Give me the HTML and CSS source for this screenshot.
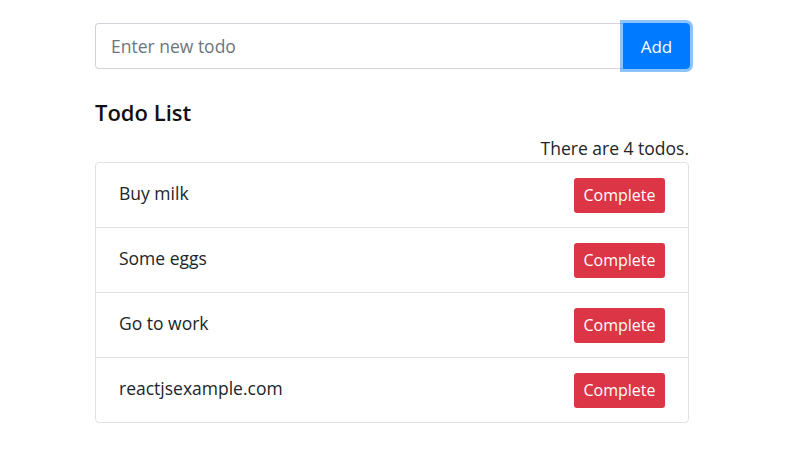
FILE: index.html
```html
<!DOCTYPE html>
<html>
<head>
<meta charset="utf-8">
<link rel="stylesheet" href="styles.css">
</head>
<body>
<div class="app">
  <form class="input-group">
    <input class="todo-input" type="text" placeholder="Enter new todo">
    <button class="add-btn" type="button">Add</button>
  </form>
  <h3 class="title">Todo List</h3>
  <div class="count">There are 4 todos.</div>
  <ul class="list">
    <li class="item"><span class="item-text">Buy milk</span><button class="complete-btn">Complete</button></li>
    <li class="item"><span class="item-text">Some eggs</span><button class="complete-btn">Complete</button></li>
    <li class="item"><span class="item-text">Go to work</span><button class="complete-btn">Complete</button></li>
    <li class="item"><span class="item-text">reactjsexample.com</span><button class="complete-btn">Complete</button></li>
  </ul>
</div>
</body>
</html>
```
FILE: styles.css
```css
* { box-sizing: border-box; }
html, body { margin: 0; padding: 0; background: #fff; }
body {
  font-family: "Open Sans", "Noto Sans", sans-serif;
  color: #212529;
}
.app {
  width: 595px;
  margin-left: 95px;
  padding-top: 23px;
}
.input-group {
  display: flex;
  height: 46px;
  margin: 0;
}
.todo-input {
  flex: 1;
  height: 46px;
  border: 1px solid #ced4da;
  border-right: none;
  border-radius: 4px 0 0 4px;
  padding: 0 15px;
  font-family: inherit;
  font-size: 17.5px;
  color: #495057;
  outline: none;
}
.todo-input::placeholder { color: #6c757d; }
.add-btn {
  width: 67px;
  height: 46px;
  border: 1px solid #007bff;
  background: #007bff;
  color: #fff;
  border-radius: 0 4px 4px 0;
  font-family: inherit;
  font-size: 17px;
  box-shadow: 0 0 0 3px rgba(0,123,255,.45);
  padding: 0;
}
.title {
  margin: 28px 0 0;
  font-size: 22px;
  font-weight: 600;
  line-height: 30px;
  color: #111;
}
.count {
  text-align: right;
  font-size: 17.5px;
  line-height: 24px;
  margin-top: 9px;
  padding-right: 1px;
}
.list {
  list-style: none;
  margin: 2px 0 0;
  padding: 0;
  border: 1px solid #dee2e6;
  border-radius: 4px;
  width: 594px;
}
.item {
  display: flex;
  align-items: center;
  justify-content: space-between;
  height: 65px;
  padding: 0 23px 0 23px;
  border-top: 1px solid #dee2e6;
}
.item:first-child { border-top: none; height: 64px; }
.item-text {
  font-size: 17.5px;
  margin-top: -5px;
}
.complete-btn {
  width: 91px;
  height: 35px;
  background: #dc3545;
  border: none;
  border-radius: 3px;
  color: #fff;
  font-family: inherit;
  font-size: 16px;
  padding: 0;
}
```
